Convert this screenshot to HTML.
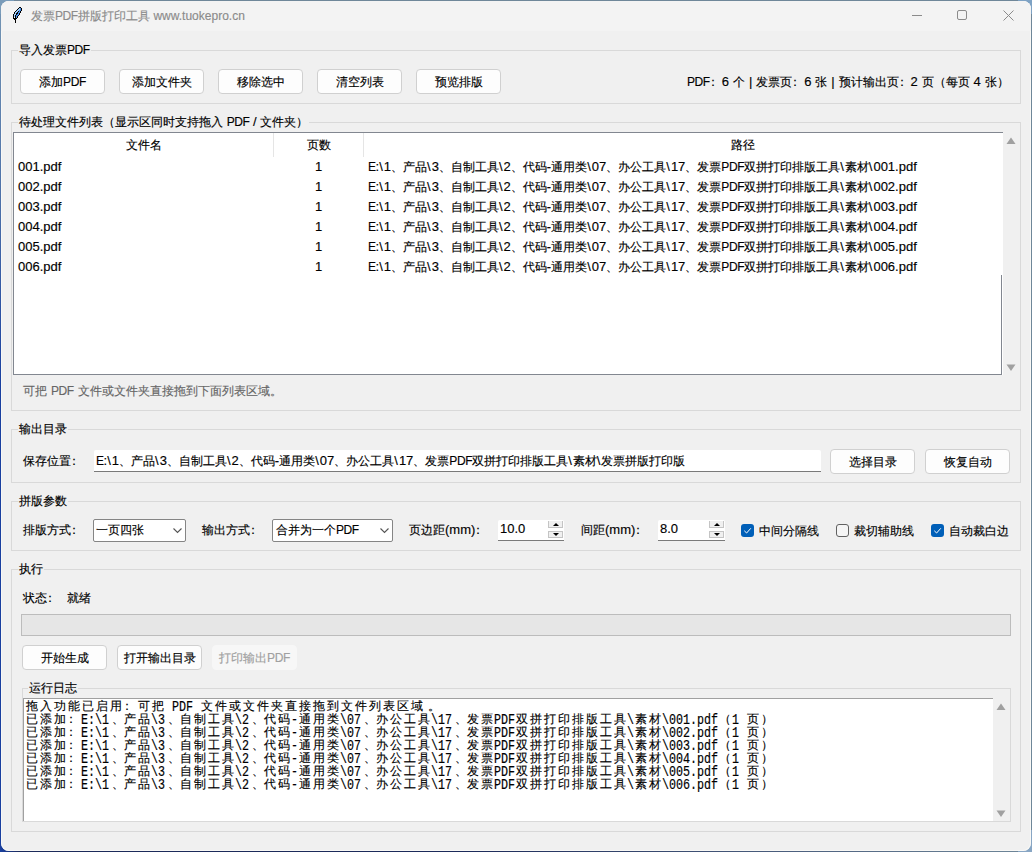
<!DOCTYPE html>
<html><head><meta charset="utf-8">
<style>
*{box-sizing:border-box;margin:0;padding:0}
html,body{width:1032px;height:852px;overflow:hidden}
body{position:relative;font-family:"Liberation Sans",sans-serif;font-size:12px;color:#000;-webkit-text-stroke:0.15px;background:#6f8799}
.abs{position:absolute}
.t{position:absolute;white-space:nowrap;line-height:16px;font-size:13px;word-spacing:0.3px}
.k{font-size:12px}
.u{font-size:12px;letter-spacing:-0.4px}
.bs{letter-spacing:1px}
.col{margin-left:-3px;margin-right:3px}
#win{position:absolute;left:1px;top:1px;width:1030px;height:850px;border-radius:8px;background:#f0f0f0;box-shadow:inset 0 0 0 1px #f8f8f6}
#tb{position:absolute;left:1px;top:1px;width:1030px;height:30px;background:#f3f3f3;border-radius:8px 8px 0 0}
.frame{position:absolute;border:1px solid #d9d9d9}
.lbl{position:absolute;font-size:13px;background:#f0f0f0;padding:0 1px;white-space:nowrap;line-height:16px}
.btn{position:absolute;font-size:13px;border:1px solid #d0d0d0;border-radius:4px;background:#fdfdfd;text-align:center;line-height:24px;white-space:nowrap}
.btn.dis{border-color:#f7f7f7;background:#f7f7f7;color:#a0a0a0}
.tv{position:absolute;background:#fff}
.entry{position:absolute;background:#fff;border-bottom:1px solid #7a7a7a;border-radius:2px 2px 0 0}
.combo{position:absolute;background:#fff;border:1px solid #858585;border-radius:2px}
.cb{position:absolute;width:13px;height:13px;border-radius:3px}
.cb.on{background:#005fb8}
.cb.off{border:1px solid #616161;background:#f5f5f5}
.log{position:absolute;font-family:"Liberation Mono",monospace;font-size:11.67px;line-height:13px;height:13px;white-space:pre}
.log span.l{display:inline-block;transform:translateY(1px) scaleY(1.28);transform-origin:0 10px}
.lc{margin-left:-3px;margin-right:3px}
.ld{margin-left:2px;margin-right:-2px}
.lp{margin-left:3px;margin-right:-3px}
.log span.c{font-family:"Liberation Sans",sans-serif;font-size:12px;letter-spacing:2px;position:relative;left:1px}
</style></head><body>
<div class="abs" style="left:0;top:0;width:14px;height:852px;background:linear-gradient(180deg,#7596b4 0,#4a6ea8 25%,#1a40a0 45%,#1a40a0 100%)"></div>
<div class="abs" style="left:0;top:838px;width:1032px;height:14px;background:linear-gradient(90deg,#1a40a0 0,#1c2a5a 20px,#1c2a5a 45%,#6f8799 100%)"></div>
<div class="abs" style="left:1018px;top:830px;width:14px;height:22px;background:#88a6c4"></div>
<div class="abs" style="left:1018px;top:0;width:14px;height:14px;background:#7ea2c4"></div>
<div class="abs" style="left:0;top:0;width:14px;height:14px;background:#7a9cba"></div>
<div id="win"></div>
<div id="tb"></div>
<svg class="abs" style="left:12px;top:6px" width="11" height="18" viewBox="0 0 11 18" shape-rendering="crispEdges"><rect x="7" y="1" width="1" height="1" fill="#000"/><rect x="8" y="1" width="1" height="1" fill="#000"/><rect x="6" y="2" width="1" height="1" fill="#000"/><rect x="7" y="2" width="1" height="1" fill="#9ccaf7"/><rect x="8" y="2" width="1" height="1" fill="#4b8fe6"/><rect x="9" y="2" width="1" height="1" fill="#000"/><rect x="5" y="3" width="1" height="1" fill="#000"/><rect x="6" y="3" width="1" height="1" fill="#9ccaf7"/><rect x="7" y="3" width="1" height="1" fill="#9ccaf7"/><rect x="8" y="3" width="1" height="1" fill="#4b8fe6"/><rect x="9" y="3" width="1" height="1" fill="#000"/><rect x="4" y="4" width="1" height="1" fill="#000"/><rect x="5" y="4" width="1" height="1" fill="#9ccaf7"/><rect x="6" y="4" width="1" height="1" fill="#9ccaf7"/><rect x="7" y="4" width="1" height="1" fill="#4b8fe6"/><rect x="8" y="4" width="1" height="1" fill="#4b8fe6"/><rect x="9" y="4" width="1" height="1" fill="#000"/><rect x="3" y="5" width="1" height="1" fill="#000"/><rect x="4" y="5" width="1" height="1" fill="#9ccaf7"/><rect x="5" y="5" width="1" height="1" fill="#9ccaf7"/><rect x="6" y="5" width="1" height="1" fill="#000"/><rect x="7" y="5" width="1" height="1" fill="#4b8fe6"/><rect x="8" y="5" width="1" height="1" fill="#000"/><rect x="2" y="6" width="1" height="1" fill="#000"/><rect x="3" y="6" width="1" height="1" fill="#9ccaf7"/><rect x="4" y="6" width="1" height="1" fill="#9ccaf7"/><rect x="5" y="6" width="1" height="1" fill="#000"/><rect x="6" y="6" width="1" height="1" fill="#4b8fe6"/><rect x="7" y="6" width="1" height="1" fill="#4b8fe6"/><rect x="8" y="6" width="1" height="1" fill="#000"/><rect x="2" y="7" width="1" height="1" fill="#000"/><rect x="3" y="7" width="1" height="1" fill="#9ccaf7"/><rect x="4" y="7" width="1" height="1" fill="#000"/><rect x="5" y="7" width="1" height="1" fill="#000"/><rect x="6" y="7" width="1" height="1" fill="#4b8fe6"/><rect x="7" y="7" width="1" height="1" fill="#000"/><rect x="1" y="8" width="1" height="1" fill="#000"/><rect x="2" y="8" width="1" height="1" fill="#9ccaf7"/><rect x="3" y="8" width="1" height="1" fill="#9ccaf7"/><rect x="4" y="8" width="1" height="1" fill="#000"/><rect x="5" y="8" width="1" height="1" fill="#4b8fe6"/><rect x="6" y="8" width="1" height="1" fill="#4b8fe6"/><rect x="7" y="8" width="1" height="1" fill="#000"/><rect x="1" y="9" width="1" height="1" fill="#000"/><rect x="2" y="9" width="1" height="1" fill="#9ccaf7"/><rect x="3" y="9" width="1" height="1" fill="#000"/><rect x="4" y="9" width="1" height="1" fill="#4b8fe6"/><rect x="5" y="9" width="1" height="1" fill="#4b8fe6"/><rect x="6" y="9" width="1" height="1" fill="#000"/><rect x="1" y="10" width="1" height="1" fill="#000"/><rect x="2" y="10" width="1" height="1" fill="#9ccaf7"/><rect x="3" y="10" width="1" height="1" fill="#000"/><rect x="4" y="10" width="1" height="1" fill="#4b8fe6"/><rect x="5" y="10" width="1" height="1" fill="#000"/><rect x="1" y="11" width="1" height="1" fill="#000"/><rect x="2" y="11" width="1" height="1" fill="#fff"/><rect x="3" y="11" width="1" height="1" fill="#000"/><rect x="4" y="11" width="1" height="1" fill="#4b8fe6"/><rect x="5" y="11" width="1" height="1" fill="#000"/><rect x="1" y="12" width="1" height="1" fill="#000"/><rect x="2" y="12" width="1" height="1" fill="#000"/><rect x="3" y="12" width="1" height="1" fill="#000"/><rect x="4" y="12" width="1" height="1" fill="#000"/><rect x="2" y="13" width="1" height="1" fill="#000"/><rect x="3" y="13" width="1" height="1" fill="#000"/><rect x="3" y="14" width="1" height="1" fill="#000"/><rect x="3" y="15" width="1" height="1" fill="#000"/><rect x="3" y="16" width="1" height="1" fill="#000"/></svg>
<div class="t" style="left:31px;top:8px;color:#8b8b8b;font-size:12px"><span class="k">发票</span><span class="u">PDF</span><span class="k">拼版打印工具</span> www.tuokepro.cn</div>
<div class="abs" style="left:912px;top:15px;width:10px;height:1px;background:#8b8b8b"></div>
<div class="abs" style="left:957px;top:10px;width:10px;height:10px;border:1px solid #8b8b8b;border-radius:2px"></div>
<svg class="abs" style="left:1003px;top:10px" width="11" height="11" viewBox="0 0 11 11"><path d="M0.5 0.5L10.5 10.5M10.5 0.5L0.5 10.5" stroke="#8b8b8b" stroke-width="1"/></svg>
<div class="frame" style="left:11px;top:50px;width:1010px;height:54px"></div>
<div class="lbl" style="left:18px;top:42px"><span class="k">导入发票</span><span class="u">PDF</span></div>
<div class="btn" style="left:20px;top:69px;width:85px;height:25px"><span class="k">添加</span><span class="u">PDF</span></div>
<div class="btn" style="left:119px;top:69px;width:85px;height:25px"><span class="k">添加文件夹</span></div>
<div class="btn" style="left:218px;top:69px;width:85px;height:25px"><span class="k">移除选中</span></div>
<div class="btn" style="left:317px;top:69px;width:85px;height:25px"><span class="k">清空列表</span></div>
<div class="btn" style="left:416px;top:69px;width:85px;height:25px"><span class="k">预览排版</span></div>
<div class="t" style="left:687px;top:74px;"><span class="u">PDF</span><span class="k"><span class="col">：</span></span>6 <span class="k">个</span> | <span class="k">发票页<span class="col">：</span></span>6 <span class="k">张</span> | <span class="k">预计输出页<span class="col">：</span></span>2 <span class="k">页（每页</span> 4 <span class="k">张）</span></div>
<div class="frame" style="left:11px;top:122px;width:1010px;height:289px"></div>
<div class="lbl" style="left:18px;top:114px"><span class="k">待处理文件列表（显示区同时支持拖入</span> <span class="u">PDF</span> / <span class="k">文件夹）</span></div>
<div class="tv" style="left:13px;top:132px;width:990px;height:243px;border-top:1px solid #828790;border-left:1px solid #828790;"></div>
<div class="abs" style="left:13px;top:374px;width:989px;height:1px;background:#828790"></div>
<div class="abs" style="left:1001px;top:275px;width:1px;height:100px;background:#828790"></div>
<div class="abs" style="left:273px;top:133px;width:1px;height:24px;background:#e5e5e5"></div>
<div class="abs" style="left:363px;top:133px;width:1px;height:24px;background:#e5e5e5"></div>
<div class="t" style="left:126px;top:137px;"><span class="k">文件名</span></div>
<div class="t" style="left:307px;top:137px;"><span class="k">页数</span></div>
<div class="t" style="left:731px;top:137px;"><span class="k">路径</span></div>
<div class="t" style="left:18px;top:159px;">001.pdf</div>
<div class="t" style="left:315px;top:159px;">1</div>
<div class="t" style="left:368px;top:159px;"><span class="u">E</span>:<span class="bs">\</span>1<span class="k">、产品</span><span class="bs">\</span>3<span class="k">、自制工具</span><span class="bs">\</span>2<span class="k">、代码</span>-<span class="k">通用类</span><span class="bs">\</span>07<span class="k">、办公工具</span><span class="bs">\</span>17<span class="k">、发票</span><span class="u">PDF</span><span class="k">双拼打印排版工具</span><span class="bs">\</span><span class="k">素材</span><span class="bs">\</span>001.pdf</div>
<div class="t" style="left:18px;top:179px;">002.pdf</div>
<div class="t" style="left:315px;top:179px;">1</div>
<div class="t" style="left:368px;top:179px;"><span class="u">E</span>:<span class="bs">\</span>1<span class="k">、产品</span><span class="bs">\</span>3<span class="k">、自制工具</span><span class="bs">\</span>2<span class="k">、代码</span>-<span class="k">通用类</span><span class="bs">\</span>07<span class="k">、办公工具</span><span class="bs">\</span>17<span class="k">、发票</span><span class="u">PDF</span><span class="k">双拼打印排版工具</span><span class="bs">\</span><span class="k">素材</span><span class="bs">\</span>002.pdf</div>
<div class="t" style="left:18px;top:199px;">003.pdf</div>
<div class="t" style="left:315px;top:199px;">1</div>
<div class="t" style="left:368px;top:199px;"><span class="u">E</span>:<span class="bs">\</span>1<span class="k">、产品</span><span class="bs">\</span>3<span class="k">、自制工具</span><span class="bs">\</span>2<span class="k">、代码</span>-<span class="k">通用类</span><span class="bs">\</span>07<span class="k">、办公工具</span><span class="bs">\</span>17<span class="k">、发票</span><span class="u">PDF</span><span class="k">双拼打印排版工具</span><span class="bs">\</span><span class="k">素材</span><span class="bs">\</span>003.pdf</div>
<div class="t" style="left:18px;top:219px;">004.pdf</div>
<div class="t" style="left:315px;top:219px;">1</div>
<div class="t" style="left:368px;top:219px;"><span class="u">E</span>:<span class="bs">\</span>1<span class="k">、产品</span><span class="bs">\</span>3<span class="k">、自制工具</span><span class="bs">\</span>2<span class="k">、代码</span>-<span class="k">通用类</span><span class="bs">\</span>07<span class="k">、办公工具</span><span class="bs">\</span>17<span class="k">、发票</span><span class="u">PDF</span><span class="k">双拼打印排版工具</span><span class="bs">\</span><span class="k">素材</span><span class="bs">\</span>004.pdf</div>
<div class="t" style="left:18px;top:239px;">005.pdf</div>
<div class="t" style="left:315px;top:239px;">1</div>
<div class="t" style="left:368px;top:239px;"><span class="u">E</span>:<span class="bs">\</span>1<span class="k">、产品</span><span class="bs">\</span>3<span class="k">、自制工具</span><span class="bs">\</span>2<span class="k">、代码</span>-<span class="k">通用类</span><span class="bs">\</span>07<span class="k">、办公工具</span><span class="bs">\</span>17<span class="k">、发票</span><span class="u">PDF</span><span class="k">双拼打印排版工具</span><span class="bs">\</span><span class="k">素材</span><span class="bs">\</span>005.pdf</div>
<div class="t" style="left:18px;top:259px;">006.pdf</div>
<div class="t" style="left:315px;top:259px;">1</div>
<div class="t" style="left:368px;top:259px;"><span class="u">E</span>:<span class="bs">\</span>1<span class="k">、产品</span><span class="bs">\</span>3<span class="k">、自制工具</span><span class="bs">\</span>2<span class="k">、代码</span>-<span class="k">通用类</span><span class="bs">\</span>07<span class="k">、办公工具</span><span class="bs">\</span>17<span class="k">、发票</span><span class="u">PDF</span><span class="k">双拼打印排版工具</span><span class="bs">\</span><span class="k">素材</span><span class="bs">\</span>006.pdf</div>
<svg class="abs" style="left:1006px;top:137px" width="10" height="8"><path d="M5 0.5L9.5 7H0.5Z" fill="#a0a0a0"/></svg>
<svg class="abs" style="left:1006px;top:364px" width="10" height="8"><path d="M0.5 0.5H9.5L5 7Z" fill="#a0a0a0"/></svg>
<div class="t" style="left:23px;top:383px;color:#666"><span class="k">可把</span> <span class="u">PDF</span> <span class="k">文件或文件夹直接拖到下面列表区域。</span></div>
<div class="frame" style="left:11px;top:429px;width:1010px;height:54px"></div>
<div class="lbl" style="left:18px;top:421px"><span class="k">输出目录</span></div>
<div class="t" style="left:23px;top:453px;"><span class="k">保存位置<span class="col">：</span></span></div>
<div class="entry" style="left:94px;top:450px;width:727px;height:22px"></div>
<div class="t" style="left:96px;top:453px;"><span class="u">E</span>:<span class="bs">\</span>1<span class="k">、产品</span><span class="bs">\</span>3<span class="k">、自制工具</span><span class="bs">\</span>2<span class="k">、代码</span>-<span class="k">通用类</span><span class="bs">\</span>07<span class="k">、办公工具</span><span class="bs">\</span>17<span class="k">、发票</span><span class="u">PDF</span><span class="k">双拼打印排版工具</span><span class="bs">\</span><span class="k">素材</span><span class="bs">\</span><span class="k">发票拼版打印版</span></div>
<div class="btn" style="left:830px;top:449px;width:85px;height:25px"><span class="k">选择目录</span></div>
<div class="btn" style="left:925px;top:449px;width:85px;height:25px"><span class="k">恢复自动</span></div>
<div class="frame" style="left:11px;top:501px;width:1010px;height:50px"></div>
<div class="lbl" style="left:18px;top:493px"><span class="k">拼版参数</span></div>
<div class="t" style="left:23px;top:522px;"><span class="k">排版方式<span class="col">：</span></span></div>
<div class="combo" style="left:93px;top:519px;width:93px;height:23px"></div>
<div class="t" style="left:96px;top:522px;"><span class="k">一页四张</span></div>
<svg class="abs" style="left:173px;top:528px" width="9" height="6"><path d="M0.5 0.5L4.5 4.5L8.5 0.5" fill="none" stroke="#555" stroke-width="1.1"/></svg>
<div class="t" style="left:202px;top:522px;"><span class="k">输出方式<span class="col">：</span></span></div>
<div class="combo" style="left:272px;top:519px;width:121px;height:23px"></div>
<div class="t" style="left:276px;top:522px;"><span class="k">合并为一个</span><span class="u">PDF</span></div>
<svg class="abs" style="left:380px;top:528px" width="9" height="6"><path d="M0.5 0.5L4.5 4.5L8.5 0.5" fill="none" stroke="#555" stroke-width="1.1"/></svg>
<div class="t" style="left:409px;top:522px;"><span class="k">页边距</span>(mm)<span class="k"><span class="col">：</span></span></div>
<div class="entry" style="left:498px;top:520px;width:66px;height:21px"></div>
<div class="t" style="left:500px;top:521px;">10.0</div>
<div class="abs" style="left:548px;top:521px;width:15px;height:7px;border:1px solid #c4c4c4;border-top:none;background:#f0f0f0"></div>
<div class="abs" style="left:548px;top:531px;width:15px;height:7px;border:1px solid #c4c4c4;background:#f0f0f0"></div>
<svg class="abs" style="left:553px;top:523px" width="6" height="4"><path d="M3 0L6 3H0Z" fill="#000"/></svg>
<svg class="abs" style="left:553px;top:533px" width="6" height="4"><path d="M0 0H6L3 3Z" fill="#000"/></svg>
<div class="t" style="left:581px;top:522px;"><span class="k">间距</span>(mm)<span class="k"><span class="col">：</span></span></div>
<div class="entry" style="left:658px;top:520px;width:67px;height:21px"></div>
<div class="t" style="left:660px;top:521px;">8.0</div>
<div class="abs" style="left:709px;top:521px;width:15px;height:7px;border:1px solid #c4c4c4;border-top:none;background:#f0f0f0"></div>
<div class="abs" style="left:709px;top:531px;width:15px;height:7px;border:1px solid #c4c4c4;background:#f0f0f0"></div>
<svg class="abs" style="left:714px;top:523px" width="6" height="4"><path d="M3 0L6 3H0Z" fill="#000"/></svg>
<svg class="abs" style="left:714px;top:533px" width="6" height="4"><path d="M0 0H6L3 3Z" fill="#000"/></svg>
<div class="cb on" style="left:741px;top:524px"></div>
<svg class="abs" style="left:741px;top:524px" width="13" height="13"><path d="M3.3 6.8L5.6 9L9.8 4.3" fill="none" stroke="#fff" stroke-width="1"/></svg>
<div class="t" style="left:759px;top:523px;"><span class="k">中间分隔线</span></div>
<div class="cb off" style="left:836px;top:524px"></div>
<div class="t" style="left:854px;top:523px;"><span class="k">裁切辅助线</span></div>
<div class="cb on" style="left:931px;top:524px"></div>
<svg class="abs" style="left:931px;top:524px" width="13" height="13"><path d="M3.3 6.8L5.6 9L9.8 4.3" fill="none" stroke="#fff" stroke-width="1"/></svg>
<div class="t" style="left:949px;top:523px;"><span class="k">自动裁白边</span></div>
<div class="frame" style="left:11px;top:569px;width:1010px;height:263px"></div>
<div class="lbl" style="left:18px;top:561px"><span class="k">执行</span></div>
<div class="t" style="left:23px;top:590px;"><span class="k">状态<span class="col">：</span></span></div>
<div class="t" style="left:67px;top:590px;"><span class="k">就绪</span></div>
<div class="abs" style="left:21px;top:614px;width:990px;height:22px;border:1px solid #bcbcbc;background:#e6e6e6"></div>
<div class="btn" style="left:22px;top:645px;width:85px;height:25px"><span class="k">开始生成</span></div>
<div class="btn" style="left:117px;top:645px;width:85px;height:25px"><span class="k">打开输出目录</span></div>
<div class="btn dis" style="left:212px;top:645px;width:85px;height:25px"><span class="k">打印输出</span><span class="u">PDF</span></div>
<div class="frame" style="left:22px;top:688px;width:989px;height:134px"></div>
<div class="lbl" style="left:28px;top:680px"><span class="k">运行日志</span></div>
<div class="abs" style="left:23px;top:698px;width:970px;height:123px;background:#fff;border-top:1px solid #a0a0a0;border-left:1px solid #a0a0a0"></div>
<svg class="abs" style="left:996px;top:703px" width="10" height="8"><path d="M5 0.5L9.5 7H0.5Z" fill="#a0a0a0"/></svg>
<svg class="abs" style="left:996px;top:810px" width="10" height="8"><path d="M0.5 0.5H9.5L5 7Z" fill="#a0a0a0"/></svg>
<div class="log" style="left:25px;top:700px"><span class="c">拖入功能已启用<span class="lc">：</span>可把</span><span class="l"> PDF </span><span class="c">文件或文件夹直接拖到文件列表区域<span class="lp">。</span></span></div>
<div class="log" style="left:25px;top:713px"><span class="c">已添加<span class="lc">：</span></span><span class="l">E:\1</span><span class="c"><span class="ld">、</span>产品</span><span class="l">\3</span><span class="c"><span class="ld">、</span>自制工具</span><span class="l">\2</span><span class="c"><span class="ld">、</span>代码</span><span class="l">-</span><span class="c">通用类</span><span class="l">\07</span><span class="c"><span class="ld">、</span>办公工具</span><span class="l">\17</span><span class="c"><span class="ld">、</span>发票</span><span class="l">PDF</span><span class="c">双拼打印排版工具</span><span class="l">\</span><span class="c">素材</span><span class="l">\001.pdf</span><span class="c">（</span><span class="l">1 </span><span class="c">页）</span></div>
<div class="log" style="left:25px;top:726px"><span class="c">已添加<span class="lc">：</span></span><span class="l">E:\1</span><span class="c"><span class="ld">、</span>产品</span><span class="l">\3</span><span class="c"><span class="ld">、</span>自制工具</span><span class="l">\2</span><span class="c"><span class="ld">、</span>代码</span><span class="l">-</span><span class="c">通用类</span><span class="l">\07</span><span class="c"><span class="ld">、</span>办公工具</span><span class="l">\17</span><span class="c"><span class="ld">、</span>发票</span><span class="l">PDF</span><span class="c">双拼打印排版工具</span><span class="l">\</span><span class="c">素材</span><span class="l">\002.pdf</span><span class="c">（</span><span class="l">1 </span><span class="c">页）</span></div>
<div class="log" style="left:25px;top:739px"><span class="c">已添加<span class="lc">：</span></span><span class="l">E:\1</span><span class="c"><span class="ld">、</span>产品</span><span class="l">\3</span><span class="c"><span class="ld">、</span>自制工具</span><span class="l">\2</span><span class="c"><span class="ld">、</span>代码</span><span class="l">-</span><span class="c">通用类</span><span class="l">\07</span><span class="c"><span class="ld">、</span>办公工具</span><span class="l">\17</span><span class="c"><span class="ld">、</span>发票</span><span class="l">PDF</span><span class="c">双拼打印排版工具</span><span class="l">\</span><span class="c">素材</span><span class="l">\003.pdf</span><span class="c">（</span><span class="l">1 </span><span class="c">页）</span></div>
<div class="log" style="left:25px;top:752px"><span class="c">已添加<span class="lc">：</span></span><span class="l">E:\1</span><span class="c"><span class="ld">、</span>产品</span><span class="l">\3</span><span class="c"><span class="ld">、</span>自制工具</span><span class="l">\2</span><span class="c"><span class="ld">、</span>代码</span><span class="l">-</span><span class="c">通用类</span><span class="l">\07</span><span class="c"><span class="ld">、</span>办公工具</span><span class="l">\17</span><span class="c"><span class="ld">、</span>发票</span><span class="l">PDF</span><span class="c">双拼打印排版工具</span><span class="l">\</span><span class="c">素材</span><span class="l">\004.pdf</span><span class="c">（</span><span class="l">1 </span><span class="c">页）</span></div>
<div class="log" style="left:25px;top:765px"><span class="c">已添加<span class="lc">：</span></span><span class="l">E:\1</span><span class="c"><span class="ld">、</span>产品</span><span class="l">\3</span><span class="c"><span class="ld">、</span>自制工具</span><span class="l">\2</span><span class="c"><span class="ld">、</span>代码</span><span class="l">-</span><span class="c">通用类</span><span class="l">\07</span><span class="c"><span class="ld">、</span>办公工具</span><span class="l">\17</span><span class="c"><span class="ld">、</span>发票</span><span class="l">PDF</span><span class="c">双拼打印排版工具</span><span class="l">\</span><span class="c">素材</span><span class="l">\005.pdf</span><span class="c">（</span><span class="l">1 </span><span class="c">页）</span></div>
<div class="log" style="left:25px;top:778px"><span class="c">已添加<span class="lc">：</span></span><span class="l">E:\1</span><span class="c"><span class="ld">、</span>产品</span><span class="l">\3</span><span class="c"><span class="ld">、</span>自制工具</span><span class="l">\2</span><span class="c"><span class="ld">、</span>代码</span><span class="l">-</span><span class="c">通用类</span><span class="l">\07</span><span class="c"><span class="ld">、</span>办公工具</span><span class="l">\17</span><span class="c"><span class="ld">、</span>发票</span><span class="l">PDF</span><span class="c">双拼打印排版工具</span><span class="l">\</span><span class="c">素材</span><span class="l">\006.pdf</span><span class="c">（</span><span class="l">1 </span><span class="c">页）</span></div>
</body></html>
